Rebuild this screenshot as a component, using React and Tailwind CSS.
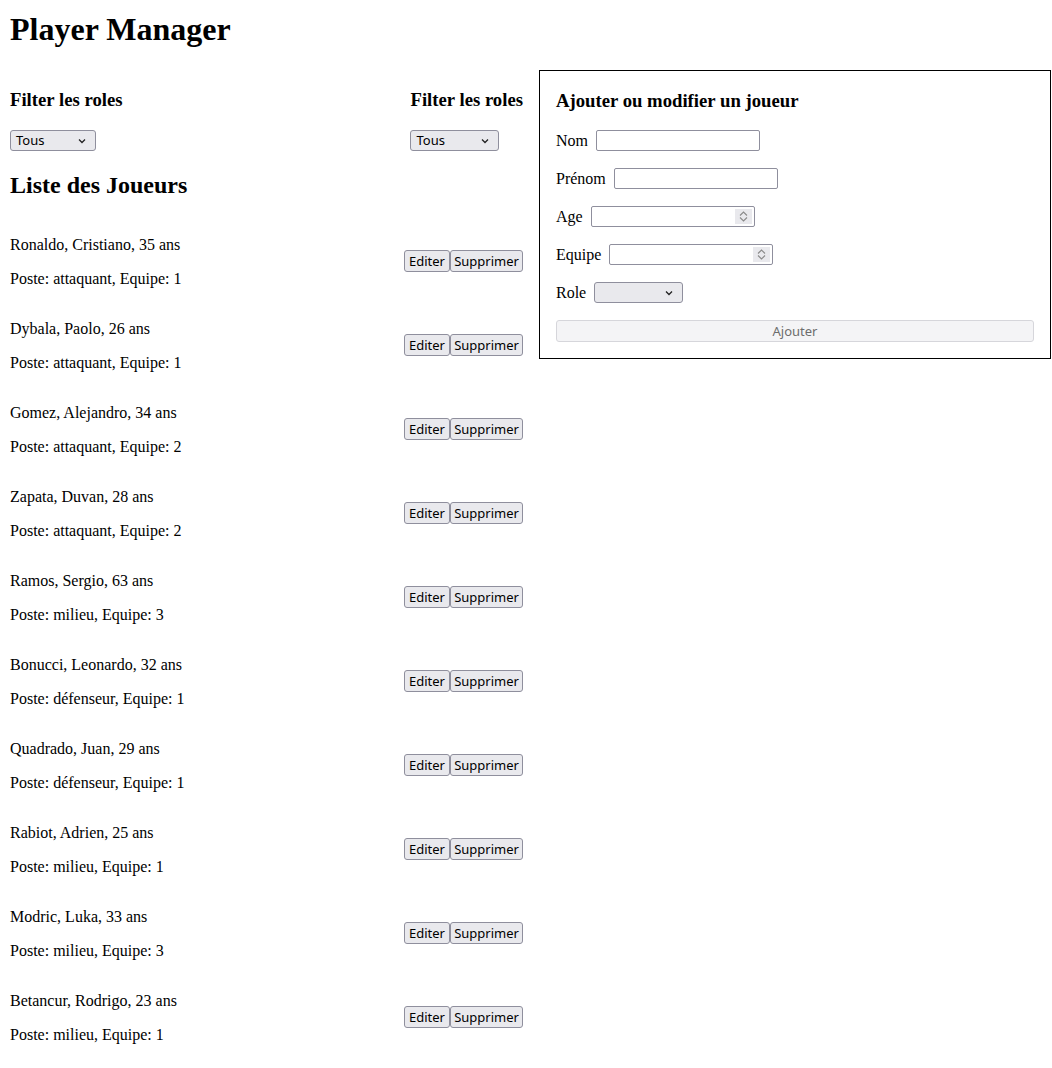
import React from "react";

const players = [
  { nom: "Ronaldo", prenom: "Cristiano", age: 35, poste: "attaquant", equipe: 1 },
  { nom: "Dybala", prenom: "Paolo", age: 26, poste: "attaquant", equipe: 1 },
  { nom: "Gomez", prenom: "Alejandro", age: 34, poste: "attaquant", equipe: 2 },
  { nom: "Zapata", prenom: "Duvan", age: 28, poste: "attaquant", equipe: 2 },
  { nom: "Ramos", prenom: "Sergio", age: 63, poste: "milieu", equipe: 3 },
  { nom: "Bonucci", prenom: "Leonardo", age: 32, poste: "défenseur", equipe: 1 },
  { nom: "Quadrado", prenom: "Juan", age: 29, poste: "défenseur", equipe: 1 },
  { nom: "Rabiot", prenom: "Adrien", age: 25, poste: "milieu", equipe: 1 },
  { nom: "Modric", prenom: "Luka", age: 33, poste: "milieu", equipe: 3 },
  { nom: "Betancur", prenom: "Rodrigo", age: 23, poste: "milieu", equipe: 1 },
];

const ui = "font-['Noto_Sans',sans-serif] text-[13px] text-black";

const Chevron = () => (
  <svg width="8" height="6" viewBox="0 0 8 6" className="shrink-0">
    <path d="M1 1.5 L4 4.5 L7 1.5" fill="none" stroke="#222" strokeWidth="1.3" />
  </svg>
);

const Select = ({ label, width }) => (
  <div
    className={`${ui} ${width} h-[21px] flex items-center justify-between pl-[5px] pr-[9px] bg-[#e9e9ed] border border-[#8f8f9d] rounded-[3px]`}
  >
    <span className="leading-none">{label}</span>
    <Chevron />
  </div>
);

const Btn = ({ children, width }) => (
  <button
    className={`${ui} ${width} h-[22px] flex items-center justify-center bg-[#e9e9ed] border border-[#8f8f9d] rounded-[3px] leading-none`}
  >
    {children}
  </button>
);

const FilterBlock = ({ width }) => (
  <div>
    <h3 className="mt-[19px] text-[18.72px] font-bold leading-[21px]">Filter les roles</h3>
    <div className="mt-[20px]">
      <Select label="Tous" width={width} />
    </div>
  </div>
);

const Spinner = () => (
  <span className="absolute right-[2px] top-[2px] bottom-[2px] w-[17px] bg-[#e9e9ed] flex flex-col items-center justify-center gap-[1px]">
    <svg width="9" height="5" viewBox="0 0 9 5">
      <path d="M1 4.5 L4.5 1 L8 4.5" fill="none" stroke="#8a8a8a" strokeWidth="1.1" />
    </svg>
    <svg width="9" height="5" viewBox="0 0 9 5">
      <path d="M1 0.5 L4.5 4 L8 0.5" fill="none" stroke="#8a8a8a" strokeWidth="1.1" />
    </svg>
  </span>
);

const Field = ({ label, number }) => (
  <div className="flex items-center gap-[8px] h-[21px]">
    <label className="leading-[18px]">{label}</label>
    <div className="relative w-[164px] h-[21px] border border-[#8f8f9d] rounded-[2px] bg-white">
      {number && <Spinner />}
    </div>
  </div>
);

export default function App() {
  return (
    <div className="font-['Liberation_Serif',serif] text-black bg-white pt-[11px] pl-[10px] pb-[20px] min-h-[1068px]">
      <h1 className="text-[32px] font-bold leading-[37px]">Player Manager</h1>
      <div className="flex gap-[16px] mt-[22px] items-start">
        <div className="w-[513px] shrink-0">
          <div className="flex justify-between">
            <FilterBlock width="w-[86px]" />
            <FilterBlock width="w-[89px]" />
          </div>
          <h2 className="mt-[20px] text-[24px] font-bold leading-[28px]">Liste des Joueurs</h2>
          <div className="mt-[20px]">
            {players.map((p) => (
              <div key={p.nom} className="flex items-center justify-between">
                <div className="pt-[17px] pb-[15px] flex flex-col gap-4 text-[16px] leading-[18px]">
                  <p>
                    {p.nom}, {p.prenom}, {p.age} ans
                  </p>
                  <p>
                    Poste: {p.poste}, Equipe: {p.equipe}
                  </p>
                </div>
                <div className="flex">
                  <Btn width="w-[46px]">Editer</Btn>
                  <Btn width="w-[73px]">Supprimer</Btn>
                </div>
              </div>
            ))}
          </div>
        </div>
        <div className="w-[512px] shrink-0 border border-black px-[16px] pt-[19px] pb-[16px] text-[16px]">
          <h3 className="text-[18.72px] font-bold leading-[21px]">Ajouter ou modifier un joueur</h3>
          <div className="mt-[19px] flex flex-col gap-[17px]">
            <Field label="Nom" />
            <Field label="Prénom" />
            <Field label="Age" number />
            <Field label="Equipe" number />
            <div className="flex items-center gap-[8px] h-[21px]">
              <label className="leading-[18px]">Role</label>
              <Select label="" width="w-[89px]" />
            </div>
            <button
              disabled
              className="font-['Noto_Sans',sans-serif] text-[13px] w-full h-[22px] flex items-center justify-center leading-none bg-[#f4f4f6] border border-[#d6d6db] rounded-[3px] text-[#6d6d6d]"
            >
              Ajouter
            </button>
          </div>
        </div>
      </div>
    </div>
  );
}
